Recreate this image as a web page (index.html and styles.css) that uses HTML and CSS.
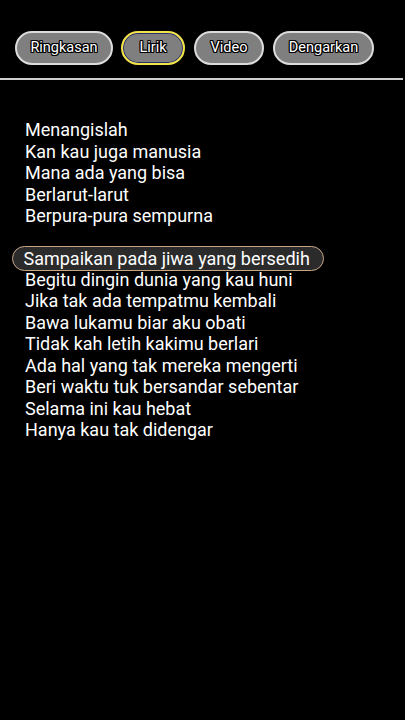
FILE: index.html
```html
<!DOCTYPE html>
<html lang="id">
<head>
<meta charset="utf-8">
<title>Lirik</title>
<link rel="stylesheet" href="styles.css">
</head>
<body>
<nav class="tabs">
  <button class="tab tab-ringkasan">Ringkasan</button>
  <button class="tab tab-lirik active">Lirik</button>
  <button class="tab tab-video">Video</button>
  <button class="tab tab-dengar">Dengarkan</button>
</nav>
<hr class="divider">
<main class="lyrics">
  <div class="stanza">
    <div class="line">Menangislah</div>
    <div class="line">Kan kau juga manusia</div>
    <div class="line">Mana ada yang bisa</div>
    <div class="line">Berlarut-larut</div>
    <div class="line">Berpura-pura sempurna</div>
  </div>
  <div class="stanza">
    <div class="line current">Sampaikan pada jiwa yang bersedih</div>
    <div class="line">Begitu dingin dunia yang kau huni</div>
    <div class="line">Jika tak ada tempatmu kembali</div>
    <div class="line">Bawa lukamu biar aku obati</div>
    <div class="line">Tidak kah letih kakimu berlari</div>
    <div class="line">Ada hal yang tak mereka mengerti</div>
    <div class="line">Beri waktu tuk bersandar sebentar</div>
    <div class="line">Selama ini kau hebat</div>
    <div class="line">Hanya kau tak didengar</div>
  </div>
</main>
</body>
</html>
```
FILE: styles.css
```css
html, body {
  margin: 0;
  padding: 0;
  background: #000;
}
body {
  width: 405px;
  height: 720px;
  overflow: hidden;
  font-family: Roboto, "Noto Sans", "Liberation Sans", sans-serif;
  color: #fff;
}
.tabs {
  display: flex;
  gap: 8px;
  padding: 31px 0 0 15px;
}
.tab {
  height: 34px;
  box-sizing: border-box;
  border: 2px solid #dcdcdc;
  border-radius: 17px;
  background: #7f7f7f;
  color: #fff;
  font-family: Roboto, "Noto Sans", "Liberation Sans", sans-serif;
  font-size: 14.5px;
  padding: 0 0 2px;
  text-shadow:
    -1px -1px 0 #000, 1px -1px 0 #000, -1px 1px 0 #000, 1px 1px 0 #000,
    0 -1px 0 #000, 0 1px 0 #000, -1px 0 0 #000, 1px 0 0 #000;
}
.tab-ringkasan { width: 98px; }
.tab-lirik { width: 64px; }
.tab-video { width: 70px; margin-left: 1px; }
.tab-dengar { width: 101px; margin-left: 1px; }
.tab.active {
  border-color: #f2e34a;
  box-shadow: inset 0 0 0 1px #2a2f6a;
}
.divider {
  margin: 13px 2px 0 0;
  border: 0;
  height: 2px;
  background: #cfcfcf;
}
.lyrics {
  padding: 39px 0 0 25px;
  font-size: 18px;
  line-height: 21.5px;
}
.stanza + .stanza {
  margin-top: 21.5px;
}
.line {
  white-space: nowrap;
}
.line.current {
  width: fit-content;
  margin: -2.5px 0 -2.5px -13.5px;
  padding: 1px 13px 1px 11px;
  border: 1.5px solid #c6a784;
  border-radius: 13px;
  background: #2b2b2b;
}
```
